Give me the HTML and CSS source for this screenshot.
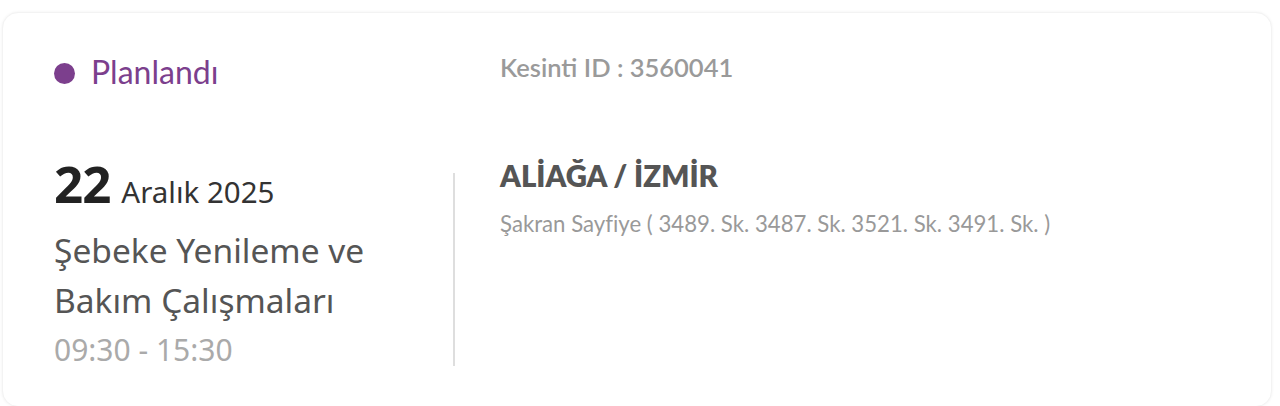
FILE: index.html
```html
<!DOCTYPE html>
<html lang="tr">
<head>
<meta charset="utf-8">
<link rel="stylesheet" href="styles.css">
</head>
<body>
<div class="card">
  <div class="status"><span class="dot"></span><span class="status-text">Planlandı</span></div>
  <div class="outage-id">Kesinti ID : 3560041</div>
  <div class="when">
    <div class="date"><span class="day">22</span><span class="month">Aralık 2025</span></div>
    <div class="title">Şebeke Yenileme ve Bakım Çalışmaları</div>
    <div class="time">09:30 - 15:30</div>
  </div>
  <div class="where">
    <div class="city">ALİAĞA / İZMİR</div>
    <div class="streets">Şakran Sayfiye ( 3489. Sk. 3487. Sk. 3521. Sk. 3491. Sk. )</div>
  </div>
</div>
</body>
</html>
```
FILE: styles.css
```css
html, body {
  margin: 0;
  padding: 0;
  background: #ffffff;
}
body {
  padding: 12px 8px 0 2px;
  height: 406px;
  box-sizing: border-box;
  overflow: hidden;
}
.card {
  background: #fff;
  border-radius: 16px;
  box-shadow: 0 0 3px rgba(0,0,0,0.06);
  border: 1px solid #f3f3f3;
  height: 395px;
  box-sizing: border-box;
  display: grid;
  grid-template-columns: 399px 1fr;
  grid-template-rows: 120px auto;
  padding: 0 0 0 51px;
}
.status {
  display: flex;
  align-items: center;
  gap: 16px;
  padding-top: 42px;
  align-self: start;
}
.dot {
  width: 21px;
  height: 21px;
  border-radius: 50%;
  background: #7c3f8d;
  margin-top: 3px;
}
.status-text {
  font-family: "Lato", sans-serif;
  font-size: 32px;
  color: #7c3f8d;
  line-height: 34px;
}
.outage-id {
  padding: 39px 0 0 47px;
  font-family: "Lato", sans-serif;
  font-size: 25.5px;
  font-weight: 600;
  color: #9a9a9a;
  line-height: 30px;
  align-self: start;
}
.when {
  padding-top: 25px;
  font-family: "Noto Sans", sans-serif;
}
.date {
  line-height: 50px;
  display: flex;
  align-items: baseline;
  gap: 11px;
}
.day {
  font-size: 51px;
  font-weight: 700;
  color: #222;
  letter-spacing: -1px;
}
.month {
  font-size: 29.5px;
  color: #333;
}
.title {
  font-size: 33.5px;
  color: #555;
  line-height: 50px;
  margin-top: 8px;
  width: 340px;
}
.time {
  font-size: 30px;
  color: #aaa;
  line-height: 36px;
  margin-top: 7px;
}
.where {
  margin-top: 40px;
  height: 193px;
  border-left: 2px solid #dedede;
  padding-left: 45px;
  font-family: "Lato", sans-serif;
  align-self: start;
}
.city {
  margin-top: -15px;
  font-size: 29.4px;
  font-weight: 800;
  color: #555;
  line-height: 36px;
}
.streets {
  margin-top: 17px;
  font-size: 22.2px;
  color: #999;
  line-height: 26px;
}
```
